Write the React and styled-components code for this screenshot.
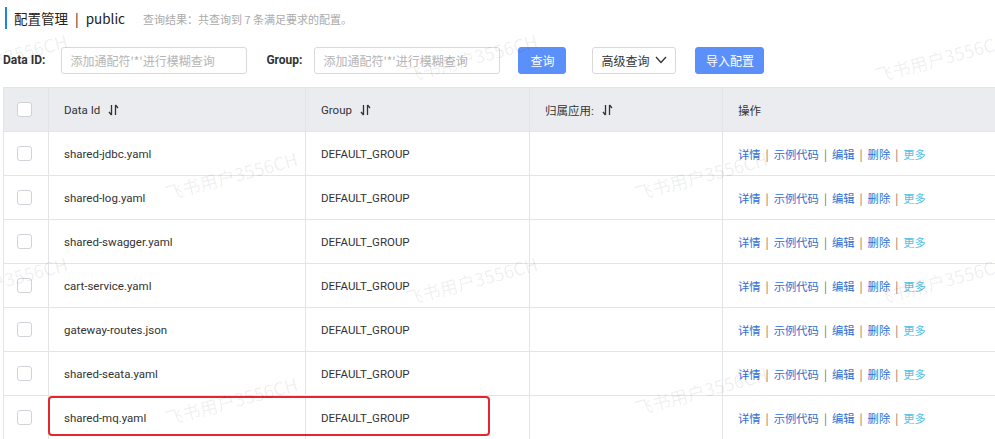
import styled, { createGlobalStyle } from "styled-components";

const GlobalStyle = createGlobalStyle`
  html, body {
    margin: 0;
    padding: 0;
    background: #ffffff;
    overflow: hidden;
  }
  body {
    font-family: Roboto, "Noto Sans CJK SC", sans-serif;
    color: #333;
  }
`;

const Page = styled.div`
  position: relative;
  width: 995px;
  height: 439px;
  overflow: hidden;
`;

const TitleBar = styled.div`
  display: flex;
  align-items: baseline;
  height: 22px;
  margin: 7px 0 0 5px;
  padding-left: 7px;
  border-left: 2px solid #1e88d8;
`;

const Title = styled.h1`
  margin: 0;
  font-size: 13.5px;
  font-weight: 400;
  line-height: 22px;
  color: #222;
  font-family: "Noto Sans CJK SC", sans-serif;
`;

const TitleSep = styled.span`
  margin: 0 7px;
`;

const Summary = styled.span`
  margin-left: 18px;
  font-size: 11px;
  color: #aaa;
  font-family: "Noto Sans CJK SC", sans-serif;
`;

const SearchRow = styled.div`
  display: flex;
  align-items: center;
  height: 28px;
  margin: 17px 0 0 3px;
`;

const Label = styled.label`
  font-size: 12px;
  font-weight: 700;
  color: #333;
  font-family: Roboto, sans-serif;
  margin-right: ${(p) => p.$gap}px;
`;

const Input = styled.input`
  box-sizing: border-box;
  width: 186px;
  height: 27px;
  padding: 0 8px;
  border: 1px solid #d9d9d9;
  border-radius: 3px;
  font-size: 12px;
  font-family: "Noto Sans CJK SC", sans-serif;
  margin-right: ${(p) => p.$gap}px;
  &::placeholder {
    color: #b5b5b5;
  }
`;

const Button = styled.button`
  box-sizing: border-box;
  display: flex;
  align-items: center;
  justify-content: center;
  gap: 6px;
  height: 27px;
  width: ${(p) => p.$w}px;
  margin-right: ${(p) => p.$gap || 0}px;
  padding: 0;
  border-radius: 3px;
  font-size: 12px;
  font-family: "Noto Sans CJK SC", sans-serif;
  border: 1px solid ${(p) => (p.$primary ? "#5b8ff9" : "#d9d9d9")};
  background: ${(p) => (p.$primary ? "#5b8ff9" : "#ffffff")};
  color: ${(p) => (p.$primary ? "#ffffff" : "#333")};
`;

const Table = styled.div`
  width: 1000px;
  margin: 13px 0 0 3px;
  border-top: 1px solid #e3e4e8;
  border-left: 1px solid #e3e4e8;
`;

const Row = styled.div`
  position: relative;
  display: grid;
  grid-template-columns: 45px 257px 224px 193px 1fr;
  height: 44px;
  box-sizing: border-box;
  border-bottom: 1px solid #e3e4e8;
  background: ${(p) => (p.$head ? "#ebecf0" : "#ffffff")};
`;

const Cell = styled.div`
  display: flex;
  align-items: center;
  padding-left: ${(p) => (p.$check ? 13 : 15)}px;
  border-right: 1px solid #e3e4e8;
  font-size: 11.5px;
  color: #333;
  font-family: Roboto, "Noto Sans CJK SC", sans-serif;
  white-space: nowrap;
  overflow: hidden;
`;

const Check = styled.span`
  box-sizing: border-box;
  width: 15px;
  height: 15px;
  border: 1px solid #cfd2d8;
  border-radius: 3px;
  background: #fff;
`;

const SortIcon = () => (
  <svg width="11" height="12" viewBox="0 0 11 12" style={{ marginLeft: 8 }}>
    <path d="M3.5 1v10M3.5 11L1 8" stroke="#333" strokeWidth="1.3" fill="none" />
    <path d="M7.5 11V1M7.5 1L10 4" stroke="#333" strokeWidth="1.3" fill="none" />
  </svg>
);

const Chevron = () => (
  <svg width="12" height="8" viewBox="0 0 12 8">
    <path d="M1 1l5 5.5L11 1" stroke="#333" strokeWidth="1.3" fill="none" />
  </svg>
);

const Actions = styled.div`
  display: flex;
  align-items: center;
  font-size: 11.3px;
  font-family: "Noto Sans CJK SC", sans-serif;
`;

const Link = styled.a`
  color: ${(p) => (p.$more ? "#4cc3e6" : "#2f6fd0")};
  text-decoration: none;
`;

const Sep = styled.span`
  color: #7a6a5a;
  margin: 0 5px;
`;

const Highlight = styled.div`
  position: absolute;
  left: 44px;
  top: 0px;
  width: 442px;
  height: 40px;
  box-sizing: border-box;
  border: 2px solid #e5262e;
  border-radius: 4px;
  pointer-events: none;
`;

const Watermark = styled.div`
  position: absolute;
  font-size: 18px;
  color: rgba(0, 0, 0, 0.07);
  font-family: "Noto Sans CJK SC", sans-serif;
  transform: rotate(-15deg);
  transform-origin: left center;
  white-space: nowrap;
  pointer-events: none;
`;

const files = [
  "shared-jdbc.yaml",
  "shared-log.yaml",
  "shared-swagger.yaml",
  "cart-service.yaml",
  "gateway-routes.json",
  "shared-seata.yaml",
  "shared-mq.yaml",
];

const actions = ["详情", "示例代码", "编辑", "删除"];

const marks = [
  [-65, 62], [405, 62], [875, 62],
  [165, 180], [635, 180],
  [-65, 285], [405, 285], [875, 285],
  [165, 405], [635, 395],
];

export default function App() {
  return (
    <Page>
      <GlobalStyle />
      <TitleBar>
        <Title>
          配置管理<TitleSep>|</TitleSep>public
        </Title>
        <Summary>查询结果：共查询到 7 条满足要求的配置。</Summary>
      </TitleBar>

      <SearchRow>
        <Label $gap={16}>Data ID:</Label>
        <Input $gap={19} placeholder="添加通配符'*'进行模糊查询" />
        <Label $gap={12}>Group:</Label>
        <Input $gap={18} placeholder="添加通配符'*'进行模糊查询" />
        <Button $primary $w={48} $gap={26}>查询</Button>
        <Button $w={84} $gap={19}>
          高级查询 <Chevron />
        </Button>
        <Button $primary $w={69}>导入配置</Button>
      </SearchRow>

      <Table>
        <Row $head>
          <Cell $check><Check /></Cell>
          <Cell>Data Id <SortIcon /></Cell>
          <Cell>Group <SortIcon /></Cell>
          <Cell>归属应用: <SortIcon /></Cell>
          <Cell>操作</Cell>
        </Row>
        {files.map((name, i) => (
          <Row key={name}>
            <Cell $check><Check /></Cell>
            <Cell>{name}</Cell>
            <Cell>DEFAULT_GROUP</Cell>
            <Cell />
            <Cell>
              <Actions>
                {actions.map((a) => (
                  <span key={a}>
                    <Link>{a}</Link>
                    <Sep>|</Sep>
                  </span>
                ))}
                <Link $more>更多</Link>
              </Actions>
            </Cell>
            {i === files.length - 1 && <Highlight />}
          </Row>
        ))}
      </Table>

      {marks.map(([x, y], i) => (
        <Watermark key={i} style={{ left: x, top: y }}>
          飞书用户3556CH
        </Watermark>
      ))}
    </Page>
  );
}
